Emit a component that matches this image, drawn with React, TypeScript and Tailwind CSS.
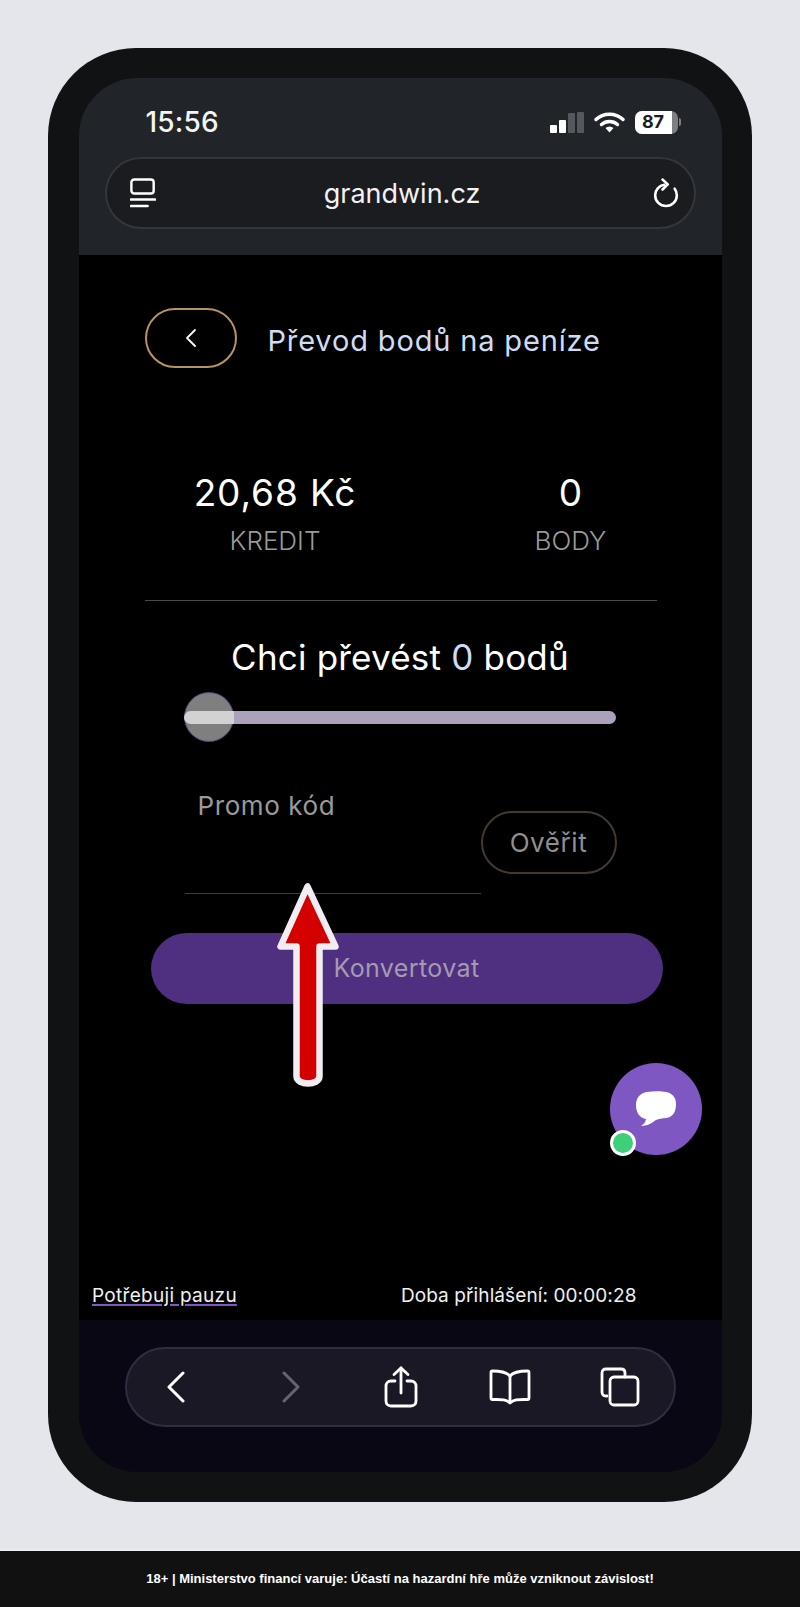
const ui = "font-['Inter',sans-serif]";

function StatusBar() {
  return (
    <div className="flex h-[66px] items-center justify-between pl-[67px] pr-[41px] pt-[22px]">
      <span className="text-[28px] font-medium leading-none tracking-[0.2px] text-[#f4f4f4]">15:56</span>
      <div className="flex items-center">
        <div className="flex h-[21px] items-end gap-[2px]">
          <div className="h-[8px] w-[7px] rounded-[1px] bg-white" />
          <div className="h-[13px] w-[7px] rounded-[1px] bg-white" />
          <div className="h-[20px] w-[7px] rounded-[1px] bg-[#55585d]" />
          <div className="h-[21px] w-[7px] rounded-[1px] bg-[#55585d]" />
        </div>
        <svg className="ml-[10px]" width="31" height="21" viewBox="0 0 31 21" fill="none">
          <path d="M2 7.5C9.5 .5 21.5 .5 29 7.5" stroke="#fff" strokeWidth="3.4" strokeLinecap="round" />
          <path d="M7.5 12.5C12 8.5 19 8.5 23.5 12.5" stroke="#fff" strokeWidth="3.4" strokeLinecap="round" />
          <path d="M11.5 16 15.5 20.5 19.5 16C17 14 14 14 11.5 16Z" fill="#fff" />
        </svg>
        <div className="ml-[10px] flex h-[23px] w-[43px] overflow-hidden rounded-[7px] bg-[#7d7f83]">
          <div className="flex w-[37px] items-center justify-center bg-white text-[18px] font-bold leading-none text-[#1b1d21]">87</div>
        </div>
        <div className="ml-[1px] h-[8px] w-[2px] rounded-r-[2px] bg-[#7d7f83]" />
      </div>
    </div>
  );
}

function AddressBar() {
  return (
    <div className="mx-[26px] mt-[13px] flex h-[72px] items-center justify-between rounded-[36px] border-2 border-[#33363c] bg-[#1a1c20] pl-[23px] pr-[15px]">
      <svg width="26" height="32" viewBox="0 0 28 32" fill="none" stroke="#fff" strokeWidth="2.6" strokeLinecap="round">
        <rect x="1.5" y="1.5" width="24" height="15" rx="3" />
        <path d="M1 23H27" />
        <path d="M1 30H19" />
      </svg>
      <span className="mr-[4px] text-[27px] leading-none text-[#f2f2f2]">grandwin.cz</span>
      <svg width="26" height="30" viewBox="0 0 30 34" fill="none" stroke="#fff" strokeWidth="3" strokeLinecap="round" strokeLinejoin="round">
        <path d="M13 7.5C7 8.5 2.5 13.500 2.500 19.500C2.500 26.500 8 32 15 32C22 32 27.500 26.500 27.500 19.500C27.500 16.500 26.500 14 25 12" />
        <path d="M11 1.500 17 7 11 13" />
      </svg>
    </div>
  );
}

function Slider() {
  return (
    <div className="relative mx-[105.500px] mt-[15px] h-[50px]">
      <div className="absolute left-0 right-0 top-[19px] h-[13px] rounded-full bg-[#aba1bd]" />
      <div className="absolute left-0 top-0 size-[50px] rounded-full border border-[#4c4478] bg-[#7f7f7f]" />
      <div className="absolute left-0 top-[19px] h-[13px] w-[50px] rounded-l-full bg-[#d2d2d2]" />
    </div>
  );
}

function BottomBar() {
  return (
    <div className="h-[152px] bg-[#0a0714] px-[46px] pt-[27px]">
      <div className="flex h-[80px] items-center rounded-[40px] border-2 border-[#302d42] bg-[#1b1825]">
        <svg className="ml-[38px]" width="22" height="32" viewBox="0 0 22 32" fill="none" stroke="#fff" strokeWidth="3" strokeLinecap="round" strokeLinejoin="round">
          <path d="M18 2 4 16 18 30" />
        </svg>
        <svg className="ml-[93px]" width="22" height="32" viewBox="0 0 22 32" fill="none" stroke="#66646f" strokeWidth="3" strokeLinecap="round" strokeLinejoin="round">
          <path d="M4 2 18 16 4 30" />
        </svg>
        <svg className="ml-[82px]" width="34" height="42" viewBox="0 0 34 42" fill="none" stroke="#fff" strokeWidth="2.8" strokeLinecap="round" strokeLinejoin="round">
          <path d="M11 15H7C4 15 2 17 2 20V35C2 38 4 40 7 40H27C30 40 32 38 32 35V20C32 17 30 15 27 15H23" />
          <path d="M17 27V2" />
          <path d="M10 8.500 17 2 24 8.500" />
        </svg>
        <svg className="ml-[71px]" width="42" height="36" viewBox="0 0 42 36" fill="none" stroke="#fff" strokeWidth="2.8" strokeLinecap="round" strokeLinejoin="round">
          <path d="M21 7C18 3.500 13 2 3.500 2 2.500 2 2 2.500 2 3.500V29C2 30 2.500 30.500 3.500 30.500 12 30.500 17 30 21 34 25 30 30 30.500 38.500 30.500 39.500 30.500 40 30 40 29V3.500C40 2.500 39.500 2 38.500 2 29 2 24 3.500 21 7Z" />
          <path d="M21 7V33" />
        </svg>
        <svg className="ml-[69px]" width="40" height="40" viewBox="0 0 40 40" fill="none" stroke="#fff" strokeWidth="2.8" strokeLinecap="round" strokeLinejoin="round">
          <path d="M7 29H6C3.500 29 2 27.500 2 25V6C2 3.500 3.500 2 6 2H21C23.500 2 25 3.500 25 6V10" />
          <rect x="10" y="10" width="28" height="28" rx="4" />
        </svg>
      </div>
    </div>
  );
}

export default function App() {
  return (
    <div className={`relative flex h-[1607px] w-[800px] flex-col overflow-hidden bg-[#e5e5ec] ${ui}`}>
      {/* phone */}
      <div className="mx-[48px] mt-[48px] h-[1454px] rounded-[88px] bg-[#111213] px-[30.500px] py-[30px]">
        <div className="flex h-full flex-col overflow-hidden rounded-[58px]">
          <div className="h-[177px] bg-[#212429]">
            <StatusBar />
            <AddressBar />
          </div>

          <div className="flex-1 bg-black">
            <div className="flex items-center pl-[66px] pt-[53px]">
              <button className="flex h-[60px] w-[92px] items-center justify-center rounded-[30px] border-2 border-[#b8925f]">
                <svg width="14" height="20" viewBox="0 0 14 20" fill="none" stroke="#fff" strokeWidth="1.8" strokeLinecap="round" strokeLinejoin="round">
                  <path d="M11 2 3 10 11 18" />
                </svg>
              </button>
              <h1 className="ml-[31px] mt-[4px] text-[29px] font-normal leading-none tracking-[0.85px] text-[#cfdcf5]">Převod bodů na peníze</h1>
            </div>

            <div className="mt-[105px] flex pl-[66px]">
              <div className="flex w-[261px] flex-col items-center">
                <span className="text-[37px] leading-[40px] tracking-[0.9px] text-white">20,68 Kč</span>
                <span className="mt-[14px] text-[26px] font-light leading-[28px] text-[#9a9a9a]">KREDIT</span>
              </div>
              <div className="ml-[90px] flex w-[150px] flex-col items-center">
                <span className="text-[37px] leading-[40px] text-white">0</span>
                <span className="mt-[14px] text-[26px] font-light leading-[28px] text-[#9a9a9a]">BODY</span>
              </div>
            </div>

            <div className="ml-[66px] mt-[45px] h-px w-[512px] bg-[#4a4a4a]" />

            <p className="mt-[36px] text-center text-[35px] leading-[40px] tracking-[0.2px] text-white">
              Chci převést <span className="text-[#cfdcf5]">0</span> bodů
            </p>

            <Slider />

            <div className="ml-[106px] mt-[48px] flex items-end">
              <label className="block h-[104px] w-[296px] border-b border-[#3f3f3f] pl-[13px] text-[26px] leading-[32px] tracking-[0.6px] text-[#9a9a9a]">
                Promo kód
              </label>
              <button className="mb-[20px] h-[63px] w-[136px] rounded-[32px] border-2 border-[#43392f] text-[26px] tracking-[0.6px] text-[#8f8f8f]">
                Ověřit
              </button>
            </div>

            <button className="ml-[72px] mt-[39px] h-[71px] w-[512px] rounded-[36px] bg-[#4f2f80] text-[25px] tracking-[0.4px] text-[#a39bb0]">
              Konvertovat
            </button>

            <div className="mt-[279px] flex items-center justify-between pl-[13.500px] pr-[85px]">
              <a className="text-[19px] leading-[26px] tracking-[0.3px] text-[#f0f0f0] underline decoration-[#7e57c2] decoration-2 underline-offset-2">Potřebuji pauzu</a>
              <span className="text-[19px] leading-[26px] tracking-[0.1px] text-[#f0f0f0]">Doba přihlášení: 00:00:28</span>
            </div>
          </div>

          <BottomBar />
        </div>
      </div>

      {/* warning strip */}
      <div className="mt-[47px] border-t-2 border-[#eeeeee]" />
      <div className="flex flex-1 items-center justify-center bg-[#111111] font-['Liberation_Sans',sans-serif] text-[13px] font-bold text-white">
        18+ | Ministerstvo financí varuje: Účastí na hazardní hře může vzniknout závislost!
      </div>

      {/* chat bubble */}
      <div className="absolute left-[610px] top-[1063px] flex size-[92px] items-center justify-center rounded-full bg-[#7e57c2]">
        <svg width="42" height="36" viewBox="0 0 42 36" fill="#fff">
          <path d="M12 1C18 0 26 0 31 1 37 2 41 6 41 13 41 21 38 26 31 27 27 27.500 24 27.500 21 29 17 32 12 35 6 35 9 33 10.500 31 11 28 5 27 1 22 1 14 1 7 5 2 12 1Z" />
        </svg>
      </div>
      <div className="absolute left-[610px] top-[1130px] size-[26px] rounded-full border-[3px] border-white bg-[#3ecf7a]" />

      {/* annotation arrow */}
      <svg className="absolute left-[270px] top-[878px]" width="76" height="214" viewBox="0 0 76 214" fill="none">
        <path
          d="M37.500 8.500 10.500 68.500H26.500V198C26.500 203 32 205.500 38 205.500 44 205.500 49.500 203 49.500 198V68.500H65.500Z"
          fill="#d40000"
          stroke="#f1edf3"
          strokeWidth="6.500"
          strokeLinejoin="round"
        />
      </svg>
    </div>
  );
}
